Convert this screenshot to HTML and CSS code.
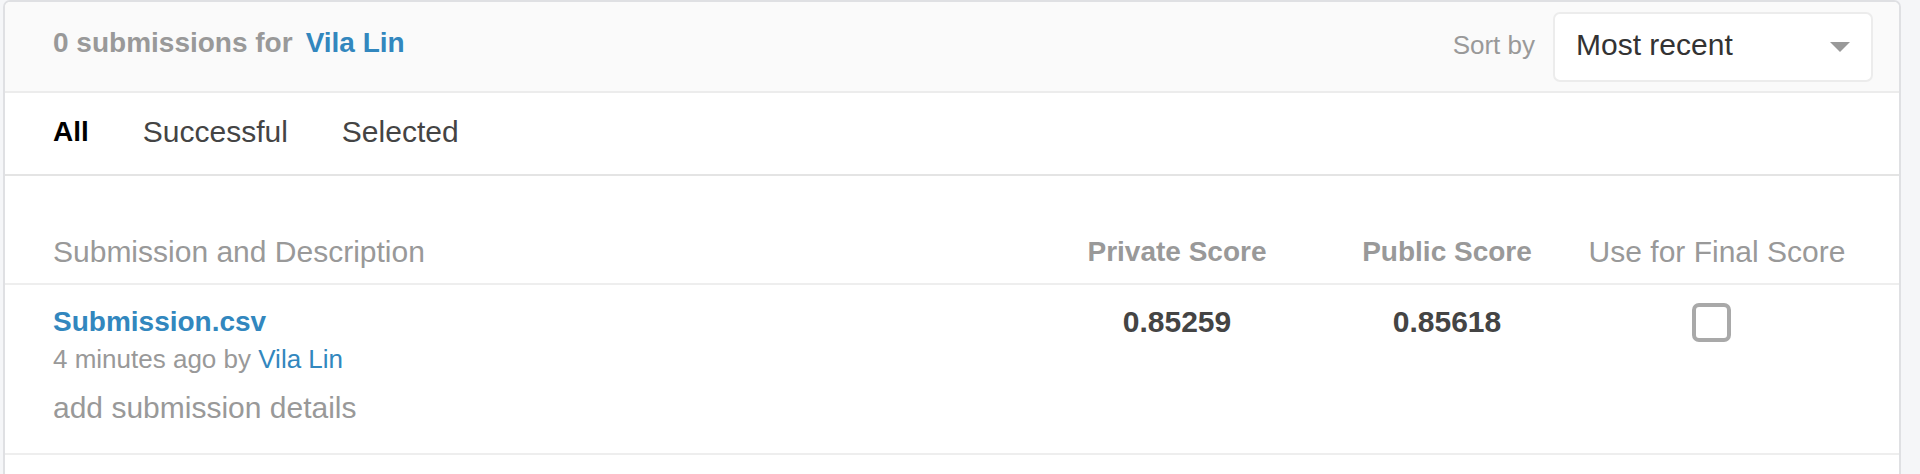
FILE: index.html
```html
<!DOCTYPE html>
<html lang="en">
<head>
<meta charset="utf-8">
<title>Submissions</title>
<link rel="stylesheet" href="styles.css">
</head>
<body>
<div class="panel">
  <div class="panel-header">
    <div class="title">0 submissions for<a class="title-user" href="#">Vila Lin</a></div>
    <div class="sort">
      <span class="sort-label">Sort by</span>
      <div class="select">
        <span class="select-value">Most recent</span>
        <span class="caret"></span>
      </div>
    </div>
  </div>
  <div class="tabs">
    <span class="tab tab-active">All</span>
    <span class="tab">Successful</span>
    <span class="tab">Selected</span>
  </div>
  <div class="table-head grid">
    <div class="th th-left">Submission and Description</div>
    <div class="th th-bold">Private Score</div>
    <div class="th th-bold">Public Score</div>
    <div class="th">Use for Final Score</div>
  </div>
  <div class="table-row grid">
    <div class="sub">
      <a class="sub-name" href="#">Submission.csv</a>
      <div class="sub-meta">4 minutes ago by <a class="link" href="#">Vila Lin</a></div>
      <div class="sub-details">add submission details</div>
    </div>
    <div class="score">0.85259</div>
    <div class="score">0.85618</div>
    <div class="check-cell"><span class="checkbox"></span></div>
  </div>
</div>
</body>
</html>
```

FILE: styles.css
```css
* { box-sizing: border-box; }
html, body { margin: 0; padding: 0; }
body {
  background: #f5f6f8;
  font-family: "Liberation Sans", Arial, sans-serif;
  height: 474px;
  overflow: hidden;
}
a { text-decoration: none; }

.panel {
  margin-left: 3px;
  width: 1898px;
  height: 480px;
  background: #fff;
  border: 2px solid #dfe0e3;
  border-bottom: none;
  border-radius: 7px 7px 0 0;
  overflow: hidden;
}

.panel-header {
  height: 91px;
  background: #fafafa;
  border-bottom: 2px solid #ececec;
  display: flex;
  align-items: center;
  justify-content: space-between;
  padding: 0 26px 0 48px;
}
.title {
  font-size: 28px;
  font-weight: bold;
  color: #999;
  line-height: 34px;
  margin-bottom: 7px;
}
.title-user {
  color: #3287be;
  margin-left: 13px;
}
.sort {
  display: flex;
  align-items: center;
  gap: 18px;
}
.sort-label {
  font-size: 26px;
  color: #999;
  line-height: 32px;
  margin-bottom: 4px;
}
.select {
  width: 320px;
  height: 70px;
  background: #fff;
  border: 2px solid #ececec;
  border-radius: 7px;
  display: flex;
  align-items: center;
  justify-content: space-between;
  padding: 0 21px 4px 21px;
}
.select-value {
  font-size: 30px;
  line-height: 36px;
  color: #333;
}
.caret {
  width: 0;
  height: 0;
  border-left: 10px solid transparent;
  border-right: 10px solid transparent;
  border-top: 10px solid #999;
  margin-top: 4px;
}

.tabs {
  height: 83px;
  border-bottom: 2px solid #e4e4e4;
  display: flex;
  align-items: flex-start;
  gap: 54px;
  padding: 21px 0 0 48px;
}
.tab {
  font-size: 30px;
  line-height: 36px;
  color: #444;
}
.tab-active {
  font-size: 28px;
  font-weight: bold;
  color: #000;
}

.grid {
  display: grid;
  grid-template-columns: 1fr 270px 270px 270px;
  padding: 0 47px 0 48px;
}
.table-head {
  padding-top: 58px;
  padding-bottom: 13px;
  border-bottom: 2px solid #eeeeee;
  align-items: start;
}
.th {
  font-size: 30px;
  line-height: 36px;
  color: #999;
  text-align: center;
}
.th-left { text-align: left; }
.th-bold {
  font-size: 28px;
  font-weight: bold;
}

.table-row {
  padding-top: 20px;
  padding-bottom: 27px;
  border-bottom: 2px solid #eeeeee;
  align-items: start;
}
.sub { display: flex; flex-direction: column; align-items: flex-start; }
.sub-name {
  font-size: 28px;
  font-weight: bold;
  line-height: 34px;
  color: #3287be;
}
.sub-meta {
  margin-top: 4px;
  font-size: 26px;
  line-height: 32px;
  color: #999;
}
.link { color: #3287be; }
.sub-details {
  margin-top: 15px;
  font-size: 30px;
  line-height: 36px;
  color: #999;
}
.score {
  font-size: 30px;
  font-weight: bold;
  line-height: 34px;
  color: #444;
  text-align: center;
}
.check-cell {
  display: flex;
  justify-content: center;
  padding-right: 12px;
  margin-top: -2px;
}
.checkbox {
  width: 39px;
  height: 39px;
  border: 4px solid #a9a9a9;
  border-radius: 7px;
  background: #fff;
}
```
